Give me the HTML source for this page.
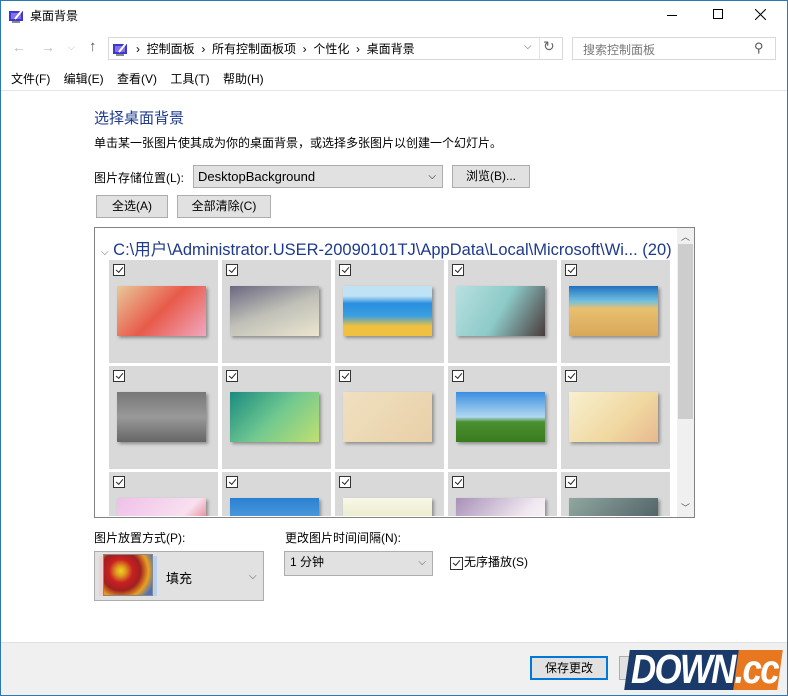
<!DOCTYPE html>
<html><head><meta charset="utf-8"><style>
*{box-sizing:border-box;margin:0;padding:0}
body{width:788px;height:696px;overflow:hidden;background:#fff;font-family:"Liberation Sans","Noto Sans CJK SC",sans-serif;font-size:12px;color:#000;position:relative}
.a{position:absolute}
.win{left:0;top:0;width:788px;height:696px;border:1px solid #2b78b4}
.btn{background:#e1e1e1;border:1px solid #adadad;text-align:center;line-height:21px}
.cb{width:12px;height:12px;border:1px solid #333;background:#fff}
.cb:after{content:"";position:absolute;left:2px;width:6px;height:3px;border-left:1.3px solid #222;border-bottom:1.3px solid #222;transform:rotate(-50deg);top:2px}
.img{width:89px;height:50px;box-shadow:2px 2px 3px rgba(0,0,0,.35)}
</style></head><body>
<div class="a win"></div>
<svg class="a" style="left:9px;top:8px" width="16" height="15"><rect x="0" y="3" width="14" height="10" fill="#3a3ad0"/><rect x="2" y="5" width="10" height="6" fill="#8a6ee8"/><path d="M6 11 L14 1" stroke="#fff" stroke-width="2"/><rect x="3" y="13" width="8" height="2" fill="#888"/></svg>
<div class="a" style="left:30px;top:7px;font-size:12px">桌面背景</div>
<div class="a" style="left:667px;top:15px;width:10px;height:1px;background:#000"></div>
<div class="a" style="left:713px;top:9px;width:10px;height:10px;border:1px solid #000"></div>
<svg class="a" style="left:755px;top:9px" width="11" height="11"><path d="M0 0L11 11M11 0L0 11" stroke="#000" stroke-width="1"/></svg>
<div class="a" style="left:12px;top:39px;color:#bbb;font-size:14px">←</div>
<div class="a" style="left:41px;top:39px;color:#bbb;font-size:14px">→</div>
<div class="a" style="left:68px;top:42px;color:#bbb;font-size:9px">⌵</div>
<div class="a" style="left:89px;top:38px;color:#555;font-size:15px">↑</div>
<div class="a" style="left:108px;top:37px;width:455px;height:23px;border:1px solid #d9d9d9"></div>
<div class="a" style="left:539px;top:38px;width:1px;height:21px;background:#e3e3e3"></div>
<svg class="a" style="left:113px;top:41px" width="16" height="15"><rect x="0" y="3" width="14" height="10" fill="#3a3ad0"/><rect x="2" y="5" width="10" height="6" fill="#8a6ee8"/><path d="M6 11 L14 1" stroke="#fff" stroke-width="2"/><rect x="3" y="13" width="8" height="2" fill="#888"/></svg>
<div class="a" style="left:136px;top:40px;white-space:pre;font-size:12px">›  控制面板  ›  所有控制面板项  ›  个性化  ›  桌面背景</div>
<div class="a" style="left:524px;top:41px;font-size:10px;color:#555">⌵</div>
<div class="a" style="left:543px;top:38px;font-size:14px;color:#666">↻</div>
<div class="a" style="left:572px;top:37px;width:204px;height:23px;border:1px solid #d9d9d9"></div>
<div class="a" style="left:583px;top:41px;color:#777">搜索控制面板</div>
<div class="a" style="left:754px;top:40px;color:#555;font-size:13px">⚲</div>
<div class="a" style="left:11px;top:70px;white-space:pre;font-size:12px">文件(F)    编辑(E)    查看(V)    工具(T)    帮助(H)</div>
<div class="a" style="left:1px;top:90px;width:786px;height:1px;background:#e5e5e5"></div>
<div class="a" style="left:94px;top:107px;font-size:15px;color:#1e3a8c">选择桌面背景</div>
<div class="a" style="left:94px;top:134px;font-size:12px">单击某一张图片使其成为你的桌面背景，或选择多张图片以创建一个幻灯片。</div>
<div class="a" style="left:94px;top:169px">图片存储位置(L):</div>
<div class="a btn" style="left:193px;top:165px;width:250px;height:23px;text-align:left;padding-left:4px;font-size:13px">DesktopBackground<span style="position:absolute;right:6px;top:0;font-size:10px">⌵</span></div>
<div class="a btn" style="left:452px;top:165px;width:78px;height:23px">浏览(B)...</div>
<div class="a btn" style="left:96px;top:195px;width:72px;height:23px">全选(A)</div>
<div class="a btn" style="left:177px;top:195px;width:94px;height:23px">全部清除(C)</div>
<div class="a" style="left:94px;top:227px;width:601px;height:291px;border:1px solid #828282;overflow:hidden">
 <div class="a" style="left:582px;top:0;width:17px;height:289px;background:#f0f0f0"></div>
 <div class="a" style="left:583px;top:16px;width:15px;height:175px;background:#cdcdcd"></div>
 <div class="a" style="left:586px;top:2px;font-size:9px;color:#555">︿</div>
 <div class="a" style="left:586px;top:273px;font-size:9px;color:#555">﹀</div>
 <div class="a" style="left:6px;top:8px;font-size:16.5px;color:#1e3a8c;white-space:nowrap"><span style="font-size:10px;color:#666">⌵</span> C:\用户\Administrator.USER-20090101TJ\AppData\Local\Microsoft\Wi... (20)</div>
</div>
<div id="tiles"></div>
<script>
var imgs=[
"linear-gradient(135deg,#e8c89a,#e85a4a 50%,#f0a8c0)",
"linear-gradient(160deg,#6a6880,#c0c0b8 50%,#ebe6d0)",
"linear-gradient(180deg,#bfe2f5 0,#bfe2f5 20%,#2a8ee0 35%,#3aa0e0 60%,#f0c040 80%)",
"linear-gradient(120deg,#b8e0e0,#8ccac8 50%,#4a3a3a)",
"linear-gradient(180deg,#2070c0,#70c0e0 30%,#e8c070 45%,#d8a858)",
"linear-gradient(180deg,#777,#999 50%,#666)",
"linear-gradient(135deg,#1a8a80,#70c890 50%,#c0e070)",
"linear-gradient(135deg,#f0e0c0,#e8d0a8)",
"linear-gradient(180deg,#3a8ee0,#b0d8f0 50%,#4a9030 60%,#3a7a20)",
"linear-gradient(135deg,#f8f0d0,#f0d8a0 60%,#e8b890)",
"linear-gradient(135deg,#f0c0e8,#f8e0f0 60%,#d03030)",
"linear-gradient(180deg,#2a80d0,#80c0f0)",
"linear-gradient(180deg,#f8f8e8,#d8d8a0)",
"linear-gradient(135deg,#a890b8,#f0e8f0 60%,#fff)",
"linear-gradient(135deg,#90a8a0,#405058)"];
var h="";
for(var r=0;r<3;r++)for(var c=0;c<5;c++){
 var x=109+c*113,y=260+r*106;
 var hh=r==2?Math.min(103,516-y):103;
 h+='<div class="a" style="left:'+x+'px;top:'+y+'px;width:109px;height:'+hh+'px;overflow:hidden;background:#d9d9d9"><div class="a cb" style="left:4px;top:4px"></div><div class="a img" style="left:8px;top:26px;background:'+imgs[r*5+c]+'"></div></div>';
}
document.getElementById("tiles").innerHTML=h;
</script>
<div class="a" style="left:94px;top:529px">图片放置方式(P):</div>
<div class="a btn" style="left:94px;top:551px;width:170px;height:50px"></div>
<div class="a" style="left:99px;top:556px;width:58px;height:40px;background:linear-gradient(90deg,#f0d0d0,#b8d0f0)"></div>
<div class="a" style="left:103px;top:554px;width:50px;height:42px;border:1px solid #888;background:radial-gradient(circle at 35% 40%,#f0d020 0,#e0a020 12%,#c82020 30%,#a02020 50%,#e8a020 70%,#4a70c0 90%)"></div>
<div class="a" style="left:166px;top:568px;font-size:13px">填充</div>
<div class="a" style="left:249px;top:571px;font-size:10px;color:#555">⌵</div>
<div class="a" style="left:285px;top:529px">更改图片时间间隔(N):</div>
<div class="a btn" style="left:284px;top:551px;width:149px;height:25px;text-align:left;padding-left:5px;font-size:12px">1 分钟<span style="position:absolute;right:6px;top:0;font-size:10px;color:#555">⌵</span></div>
<div class="a cb" style="left:450px;top:557px;width:13px;height:13px"></div>
<div class="a" style="left:464px;top:553px">无序播放(S)</div>
<div class="a" style="left:1px;top:642px;width:786px;height:53px;background:#f0f0f0;border-top:1px solid #dfdfdf"></div>
<div class="a btn" style="left:530px;top:656px;width:78px;height:24px;border:2px solid #0078d7;line-height:20px">保存更改</div>
<div class="a btn" style="left:619px;top:656px;width:40px;height:24px"></div>
<div class="a" style="left:627px;top:650px;width:112px;height:40px;background:#1a3a6a;transform:skewX(-8deg)"></div>
<div class="a" style="left:736px;top:650px;width:44px;height:40px;background:#e87820;transform:skewX(-8deg)"></div>
<div class="a" style="left:631px;top:646px;color:#fff;font-size:41px;font-weight:bold;font-style:italic;letter-spacing:-2px;transform:scaleX(.85);transform-origin:left">DOWN.cc</div>
</body></html>
